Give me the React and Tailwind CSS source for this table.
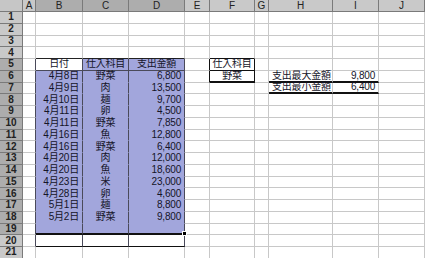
import React from 'react';

const COLS = ['A', 'B', 'C', 'D', 'E', 'F', 'G', 'H', 'I', 'J'];

// row -> [B, C, D]
const DATA = {
  5: ['日付', '仕入科目', '支出金額'],
  6: ['4月8日', '野菜', '6,800'],
  7: ['4月9日', '肉', '13,500'],
  8: ['4月10日', '麺', '9,700'],
  9: ['4月11日', '卵', '4,500'],
  10: ['4月11日', '野菜', '7,850'],
  11: ['4月16日', '魚', '12,800'],
  12: ['4月16日', '野菜', '6,400'],
  13: ['4月20日', '肉', '12,000'],
  14: ['4月20日', '魚', '18,600'],
  15: ['4月23日', '米', '23,000'],
  16: ['4月28日', '卵', '4,600'],
  17: ['5月1日', '麺', '8,800'],
  18: ['5月2日', '野菜', '9,800'],
};

const EXTRA = {
  '5-5': '仕入科目',
  '6-5': '野菜',
  '6-7': '支出最大金額',
  '6-8': '9,800',
  '7-7': '支出最小金額',
  '7-8': '6,400',
};

function cellText(r, c) {
  if (DATA[r] && c >= 1 && c <= 3) return DATA[r][c - 1];
  return EXTRA[`${r}-${c}`] || '';
}

function Cell({ r, c }) {
  const inTable = c >= 1 && c <= 3 && r >= 5 && r <= 20;
  const selected = c >= 1 && c <= 3 && r >= 5 && r <= 19 && !(r === 5 && c === 1);

  let bg = selected ? 'bg-[#a2a6dc]' : 'bg-white';
  let right = 'border-r border-r-[#c8c8c8]';
  let bottom = selected ? 'border-b border-b-[#a2a6dc]' : 'border-b border-b-[#c8c8c8]';

  // table outline and column rules
  if (inTable || (c === 0 && r >= 5 && r <= 20)) right = 'border-r border-r-[#4a4a5a]';
  if (c >= 1 && c <= 3 && r === 4) bottom = 'border-b border-b-[#222]';
  if (c >= 1 && c <= 3 && r === 5) bottom = 'border-b border-b-[#4a4a5a]';
  if (c >= 1 && c <= 3 && r === 19) bottom = 'border-b-2 border-b-[#111]';
  if (c >= 1 && c <= 3 && r === 20) bottom = 'border-b border-b-[#111]';

  // F5 / F6 boxes
  if (c === 5 && r === 4) bottom = 'border-b border-b-[#111]';
  if ((c === 4 || c === 5) && (r === 5 || r === 6)) right = 'border-r border-r-[#111]';
  if (c === 5 && r === 5) bottom = 'border-b border-b-[#111]';
  if (c === 5 && r === 6) bottom = 'border-b-2 border-b-[#111]';

  // H6:I7 underlines
  if ((c === 7 || c === 8) && (r === 6 || r === 7)) bottom = 'border-b-2 border-b-[#111]';

  let align = 'justify-center';
  if (c === 1 && r >= 6) align = 'justify-end pr-[3px]';
  if (c === 3 && r >= 6) align = 'justify-end pr-[3px]';
  if (c === 7) align = 'justify-start pl-[3px]';
  if (c === 8) align = 'justify-end pr-[3px]';

  const fill = c === 3 && r === 19;

  return (
    <div className={`relative flex items-center overflow-visible whitespace-nowrap text-[10px] tracking-[-0.2px] leading-none text-[#141428] ${bg} ${right} ${bottom} ${align}`}>
      {cellText(r, c)}
      {fill && <span className="absolute -right-[3px] -bottom-[3px] h-[5px] w-[5px] bg-black border border-white z-10" />}
    </div>
  );
}

export default function App() {
  const rows = Array.from({ length: 21 }, (_, i) => i + 1);

  return (
    <div
      className="w-[425px] h-[258px] overflow-hidden bg-white"
      style={{ fontFamily: '"Liberation Sans", "Noto Sans CJK JP", sans-serif' }}
    >
      <div className="grid grid-cols-[23px_13px_47px_46px_56px_25px_45px_14px_64px_46px_46px] grid-rows-[12px_repeat(21,11.75px)]">
        {/* corner */}
        <div className="bg-[#c6c6c6] border-r border-b border-[#7a7a7a]" />
        {COLS.map((name, c) => (
          <div
            key={name}
            className={`flex items-center justify-center text-[10px] leading-none text-[#222] border-r border-b border-[#7a7a7a] ${c >= 1 && c <= 3 ? 'bg-[#adadad]' : 'bg-[#c9c9c9]'}`}
          >
            {name}
          </div>
        ))}

        {rows.map((r) => (
          <React.Fragment key={r}>
            <div
              className={`flex items-center justify-center text-[10px] font-bold leading-none text-[#222] border-r border-b border-[#7a7a7a] ${r >= 5 && r <= 19 ? 'bg-[#adadad]' : 'bg-[#c9c9c9]'}`}
            >
              {r}
            </div>
            {COLS.map((name, c) => (
              <Cell key={name} r={r} c={c} />
            ))}
          </React.Fragment>
        ))}
      </div>
    </div>
  );
}
